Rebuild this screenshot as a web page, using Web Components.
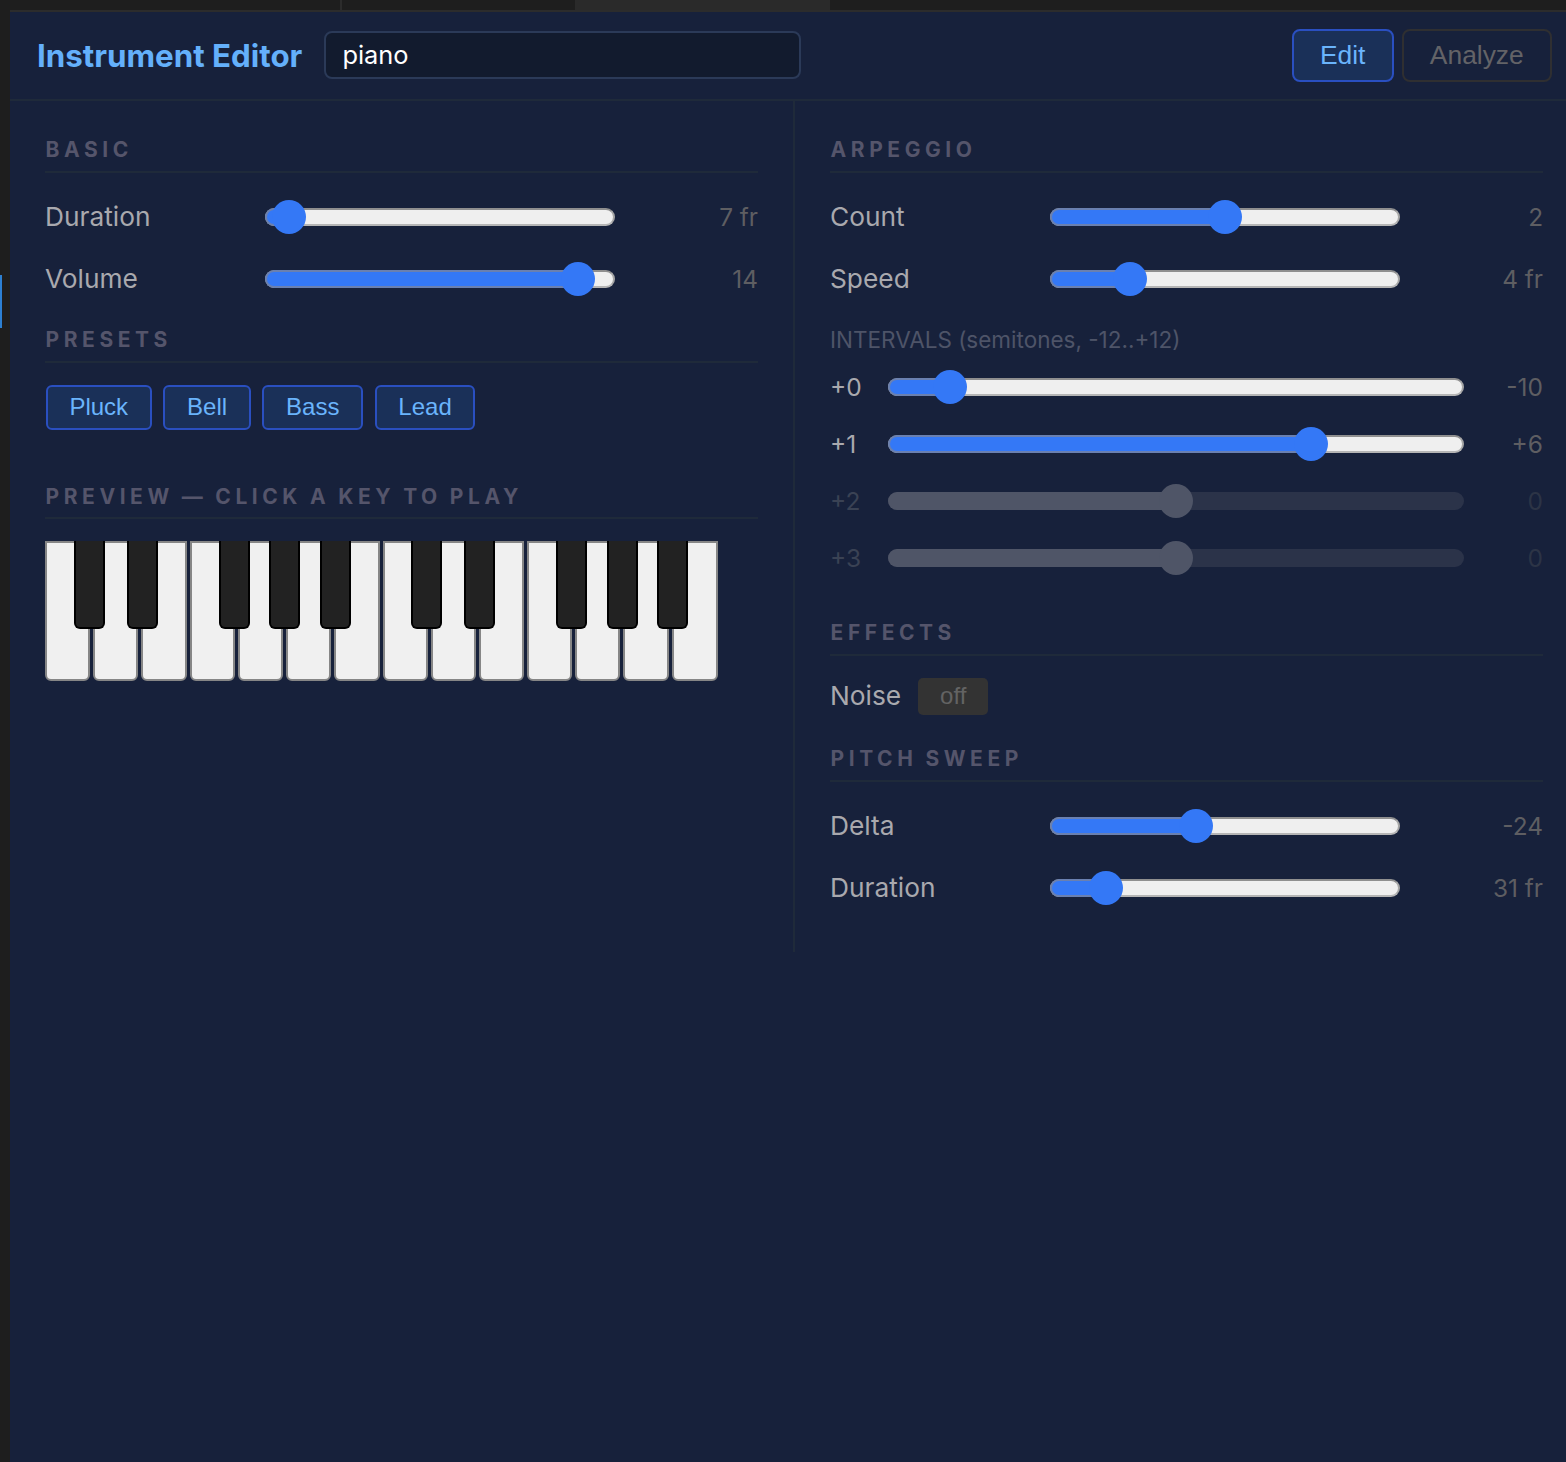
<!DOCTYPE html>
<html><head><meta charset="utf-8"><style>
html,body{margin:0;padding:0;background:#1e1e1e}
body{width:1566px;height:1462px;overflow:hidden;font-family:Inter,"Liberation Sans",sans-serif}
</style></head><body>
<app-shell></app-shell>
<script>
const F='Inter,"Liberation Sans",sans-serif';
function def(n,css,html){customElements.define(n,class extends HTMLElement{connectedCallback(){if(this.shadowRoot)return;const s=this.attachShadow({mode:'open'});s.innerHTML='<style>'+css+'</style>'+(typeof html==='function'?html(this):html);}});}

def('sec-title',`:host{display:block;font:700 21px/28px ${F};letter-spacing:4.55px;word-spacing:-1.5px;color:#55556b;border-bottom:2px solid #1f2a3a;height:35px;box-sizing:border-box;box-sizing:content-box;text-indent:.6px;white-space:nowrap}
:host([low]){height:34px;padding-top:1px}`,'<slot></slot>');

def('range-track',`:host{display:block;position:relative;height:20px}
.t{position:absolute;left:0;right:0;top:1px;height:18px;box-sizing:border-box;border-radius:9px;background:#efefef;border:2px solid #8f8f8f;border-color:#8f8f8f #a5a5a5 #b5b5b5}
.o{position:absolute;left:0;top:1px;height:18px;box-sizing:border-box;border-radius:9px 0 0 9px;border:2px solid #6a80b0;border-right:0;background:#3478f6}
.k{position:absolute;top:-7px;width:34px;height:34px;margin-left:-17px;border-radius:50%;background:#3478f6}
:host([disabled]) .t{background:#2b3349;border:0}
:host([disabled]) .o{background:#4f5567;border:0}
:host([disabled]) .k{background:#4f5567}
`,h=>{const p=h.getAttribute('pos');return `<div class="t"></div><div class="o" style="width:${p}px"></div><div class="k" style="left:${p}px"></div>`});

def('param-row',`:host{display:grid;grid-template-columns:220px 350px 1fr;align-items:center;height:62px;color:#a9a9ae;font:400 26.3px/32px ${F}}
.v{text-align:right;color:#5e5e62;font-size:24.4px}`,h=>`<span>${h.getAttribute('label')}</span><range-track pos="${h.getAttribute('pos')}"></range-track><span class="v">${h.getAttribute('val')}</span>`);

def('interval-row',`:host{display:grid;grid-template-columns:58px 576px 1fr;align-items:center;height:57px;color:#a9a9ae;font:400 24.5px/32px ${F}}
.v{text-align:right;color:#5e5e62}
:host([disabled]) .l{color:#3a4254}:host([disabled]) .v{color:#2c3446}`,h=>`<span class="l">${h.getAttribute('label')}</span><range-track pos="${h.getAttribute('pos')}" ${h.hasAttribute('disabled')?'disabled':''}></range-track><span class="v">${h.getAttribute('val')}</span>`);

def('pill-btn',`:host{display:inline-flex;align-items:center;justify-content:center;box-sizing:border-box;height:45px;padding:0 21.7px 2px;border:2px solid #2a4fc0;border-radius:6px;background:#1a3058;color:#6ab4fc;font:400 24px/1 "Liberation Sans",Arial,sans-serif;}
:host([big]){height:53px;padding:0 26.25px;border-radius:8px;font-size:26.4px}
:host([ghost]){background:transparent;border-color:#2f2f31;color:#636367}`,'<slot></slot>');

def('piano-keys',`:host{display:block;position:relative;width:673px;height:140px}
.w{display:flex;height:100%}
.w i{display:block;box-sizing:border-box;height:100%;background:#f0f0f0;border:2px solid #868686;border-radius:0 0 6px 6px}
.b{position:absolute;top:0;width:31px;height:88px;box-sizing:border-box;background:#222;border:2px solid #000;border-top:0;border-radius:0 0 6px 6px}`,
()=>{
 const wx=[0,48,96,145,193,241,289,338,386,434,482,530,578,627,673];
 let w='';for(let i=0;i<14;i++){const width=(i==13?673:wx[i+1]-3)-wx[i];w+=`<i style="width:${width}px;margin-right:${i==13?0:3}px"></i>`;}
 const bx=[29,82,174,224,275,366,419,511,562,612];
 return `<div class="w">${w}</div>`+bx.map(x=>`<div class="b" style="left:${x}px"></div>`).join('');
});

def('top-tabs',`:host{display:flex;height:10px;background:#1e1e1e}
.a{width:340px;border-right:2px solid #2c2c2c}.b{width:233px}.c{width:255px;background:#2a2a2a}`,'<div class="a"></div><div class="b"></div><div class="c"></div>');

def('editor-head',`:host{display:flex;align-items:center;height:89px;box-sizing:border-box;padding:0 14px 0 27px;border-bottom:2px solid #1f2a3a}
h1{margin:0;padding-top:2px;font:700 31.3px/1 ${F};color:#64b0fb;white-space:nowrap}
.inp{box-sizing:border-box;width:477px;height:48px;margin-left:22px;margin-top:-1px;padding-left:16px;background:#121b2e;border:2px solid #2b3a58;border-radius:8px;color:#fff;font:400 25.4px/44px ${F}}
.sp{flex:1}.g{display:flex;gap:8px}`,'<h1>Instrument Editor</h1><div class="inp">piano</div><div class="sp"></div><div class="g"><pill-btn big>Edit</pill-btn><pill-btn big ghost>Analyze</pill-btn></div>');

def('app-shell',`:host{display:block;width:1566px;height:1462px;background:#1e1e1e;position:relative}
.panel{margin-left:10px;height:1450px;background:#17213b;border-top:2px solid #2c2c2c}
.cols{display:grid;grid-template-columns:785px 1fr;height:851px}
.l{padding:35px 35px 0 35px;border-right:2px solid #1f2a3a}
.r{padding:35px 23px 0 35px}
.presets{display:flex;gap:11.6px;margin:22px 0 0 .7px}
.sm{font:400 22.5px/28px ${F};color:#4e5468}
.edge{position:absolute;left:0;top:275px;width:1.5px;height:53px;background:#2d7fd0}
.noise{display:flex;align-items:center;height:38px;margin-top:21px;color:#a9a9ae;font:400 26.3px/32px ${F}}
.off{margin-left:17px;width:70px;height:37px;border-radius:5px;background:#333;color:#636363;font:400 24px/35px "Liberation Sans",Arial,sans-serif;text-align:center}
`,`<top-tabs></top-tabs><div class="edge"></div><div class="panel"><editor-head></editor-head><div class="cols">
<div class="l"><sec-title>BASIC</sec-title>
<div style="margin-top:13px"><param-row label="Duration" pos="24" val="7 fr"></param-row><param-row label="Volume" pos="313" val="14"></param-row></div>
<sec-title style="margin-top:16px">PRESETS</sec-title>
<div class="presets"><pill-btn>Pluck</pill-btn><pill-btn>Bell</pill-btn><pill-btn>Bass</pill-btn><pill-btn>Lead</pill-btn></div>
<sec-title low style="margin-top:52px">PREVIEW — CLICK A KEY TO PLAY</sec-title>
<piano-keys style="margin-top:22px"></piano-keys>
</div>
<div class="r"><sec-title>ARPEGGIO</sec-title>
<div style="margin-top:13px"><param-row label="Count" pos="175" val="2"></param-row><param-row label="Speed" pos="80" val="4 fr"></param-row></div>
<div class="sm" style="margin-top:16px">INTERVALS (semitones, -12..+12)</div>
<div style="margin-top:4px">
<interval-row label="+0" pos="62" val="-10"></interval-row>
<interval-row label="+1" pos="423" val="+6"></interval-row>
<interval-row label="+2" pos="288" val="0" disabled></interval-row>
<interval-row label="+3" pos="288" val="0" disabled></interval-row></div>
<sec-title style="margin-top:33px">EFFECTS</sec-title>
<div class="noise"><span>Noise</span><span class="off">off</span></div>
<sec-title style="margin-top:30px">PITCH SWEEP</sec-title>
<div style="margin-top:13px"><param-row label="Delta" pos="146" val="-24"></param-row><param-row label="Duration" pos="56" val="31 fr"></param-row></div>
</div></div></div>`);
</script></body></html>
